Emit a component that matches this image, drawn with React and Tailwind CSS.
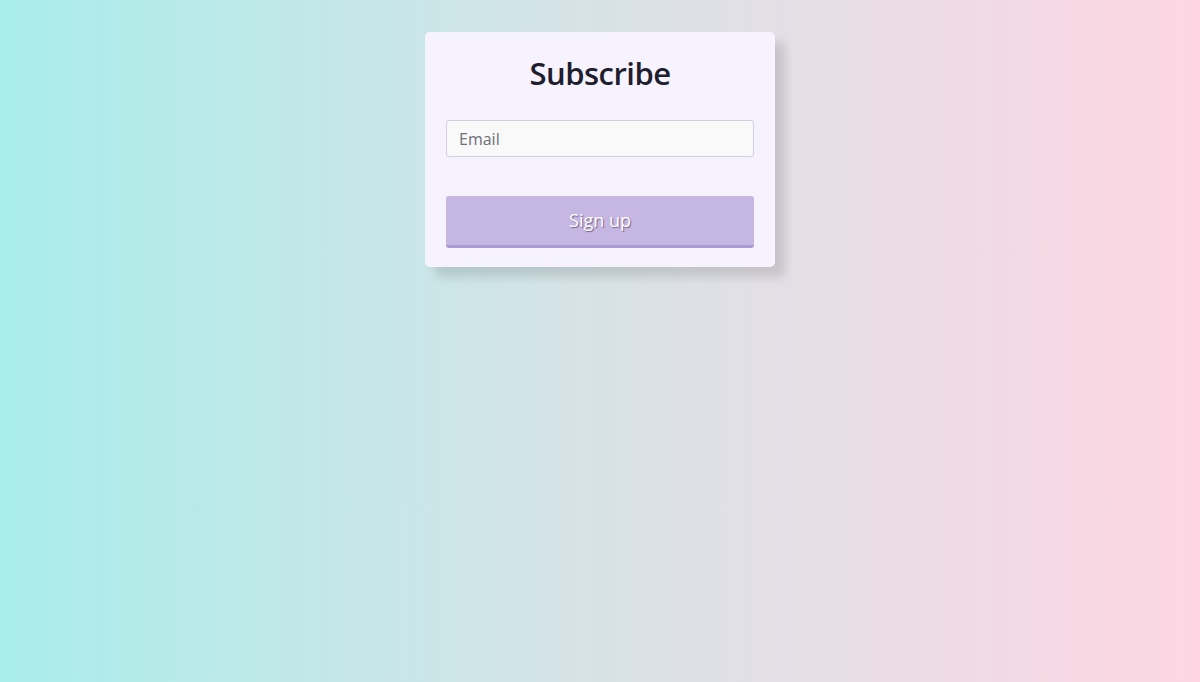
import React from 'react';

const App = () => {
  return (
    <div className="min-h-[682px] w-full bg-gradient-to-r from-[#a8edea] to-[#fed6e3] flex justify-center pt-8" style={{ fontFamily: '"Open Sans", "Noto Sans", sans-serif' }}>
      <div className="w-[350px] h-[235px] bg-[#f6f3fe] rounded-[5px] shadow-[10px_10px_10px_rgba(0,0,0,0.12)] px-[21px] pt-[18px]">
        <h1 className="text-center text-[31px] leading-[46px] text-[#1f1e2e] font-semibold tracking-[-0.5px]">Subscribe</h1>
        <input
          type="email"
          placeholder="Email"
          className="mt-[24px] block w-full h-[37px] bg-[#f9f9f9] border border-[#d3cee0] rounded-[3px] px-3 text-[16px] text-gray-700 placeholder:text-[#6b6f78] outline-none"
        />
        <button
          className="mt-[39px] w-full h-[52px] bg-[#c5b7e2] border-b-[3px] border-[#ab99d7] rounded-[3px] text-white text-[18px] [text-shadow:1px_1px_1px_rgba(60,40,90,0.6)]"
        >
          Sign up
        </button>
      </div>
    </div>
  );
};

export default App;
